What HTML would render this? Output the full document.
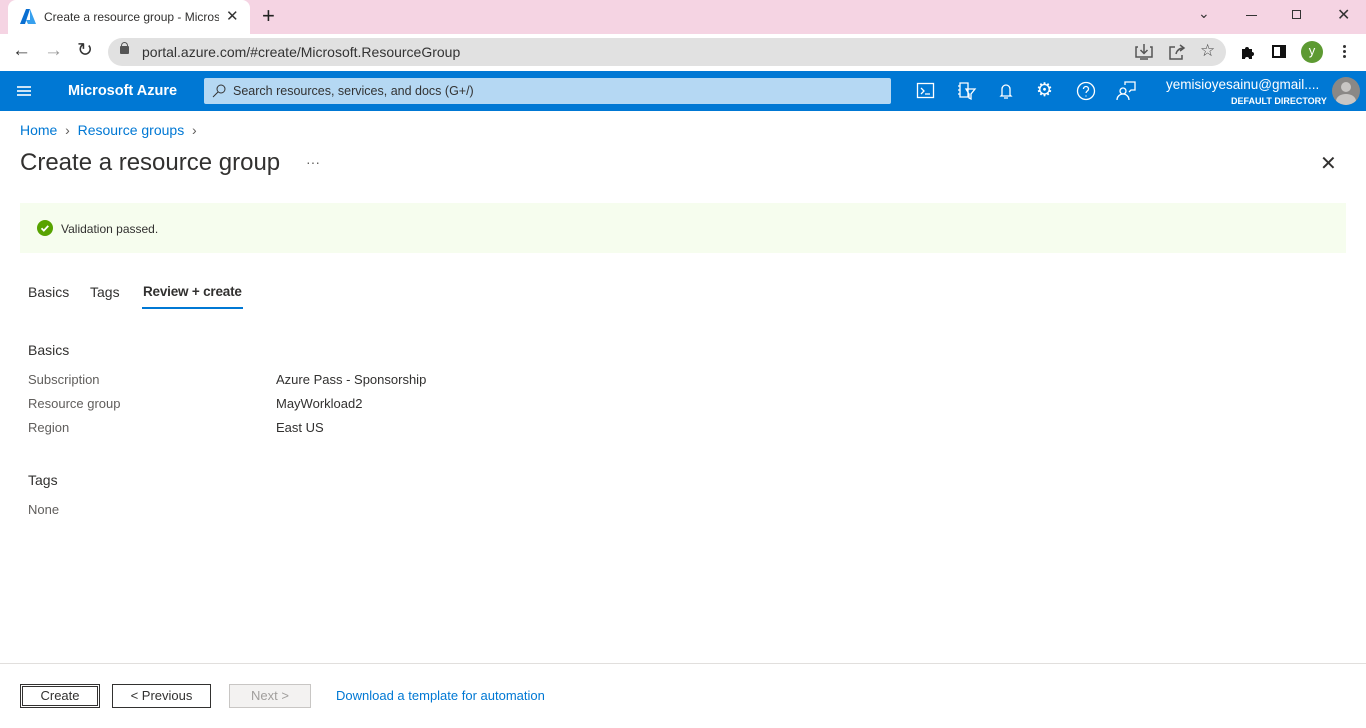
<!DOCTYPE html>
<html><head><style>
*{margin:0;padding:0;box-sizing:border-box}
body{width:1366px;height:728px;overflow:hidden;font-family:"Liberation Sans",sans-serif;background:#fff;position:relative;color:#323130}
.a{position:absolute}
.t{font-size:13px;color:#323130;white-space:nowrap}
.lbl{color:#605e5c}
.ic{position:absolute;fill:none;stroke:#fff;stroke-width:1.3}
.gi{position:absolute;fill:none;stroke:#555;stroke-width:1.5}
</style></head><body>
<!-- tab strip -->
<div class="a" style="left:0;top:0;width:1366px;height:34px;background:#f5d4e3"></div>
<div class="a" style="left:8px;top:0;width:242px;height:34px;background:#fff;border-radius:8px 8px 0 0"></div>
<svg class="a" style="left:20px;top:9px" width="16" height="15" viewBox="0 0 16 15"><path d="M6 0h4L5 15H0z" fill="#0a6fd1"/><path d="M10 0l6 15H8l-2-4h4z" fill="#37a0ee"/></svg>
<div class="a t" style="left:44px;top:10px;font-size:12px;width:175px;overflow:hidden">Create a resource group - Micros</div>
<div class="a" style="left:226px;top:7px;font-size:15px;color:#333">✕</div>
<div class="a" style="left:262px;top:3px;font-size:22px;color:#222">+</div>
<div class="a" style="left:1198px;top:5px;font-size:14px;color:#333">⌄</div>
<div class="a" style="left:1246px;top:15px;width:11px;height:1px;background:#333"></div>
<div class="a" style="left:1292px;top:10px;width:9px;height:9px;border:1px solid #333"></div>
<div class="a" style="left:1337px;top:5px;font-size:16px;color:#333">✕</div>
<!-- toolbar -->
<div class="a" style="left:0;top:34px;width:1366px;height:37px;background:#fff"></div>
<div class="a" style="left:12px;top:40px;font-size:19px;color:#333">←</div>
<div class="a" style="left:44px;top:40px;font-size:19px;color:#999">→</div>
<div class="a" style="left:77px;top:39px;font-size:19px;color:#333">↻</div>
<div class="a" style="left:108px;top:38px;width:1118px;height:28px;background:#e1e1e1;border-radius:14px"></div>
<div class="a" style="left:120px;top:46px;width:9px;height:8px;background:#555;border-radius:1px"></div>
<div class="a" style="left:121px;top:42px;width:7px;height:6px;border:1.5px solid #555;border-bottom:none;border-radius:4px 4px 0 0"></div>
<div class="a t" style="left:142px;top:44px;font-size:14px;color:#333">portal.azure.com/#create/Microsoft.ResourceGroup</div>
<svg class="gi" style="left:1135px;top:43px" width="18" height="18"><path d="M3 4H1v10h16V4h-2M9 1v9M5.5 7L9 10.5 12.5 7M5 16h8"/></svg>
<svg class="gi" style="left:1168px;top:43px" width="18" height="18"><path d="M7 4H2v12h12v-4M8 11c1-4 4-6 8-6M12 2l4 3-4 3"/></svg>
<div class="a" style="left:1200px;top:41px;font-size:17px;color:#444">☆</div>
<svg class="a" style="left:1240px;top:44px" width="16" height="16"><path d="M2 5h3a2 2 0 014 0h3v3a2 2 0 010 4v3H9a2 2 0 00-4 0H2z" fill="#111"/></svg>
<div class="a" style="left:1272px;top:45px;width:14px;height:13px;border:2px solid #111;border-right-width:6px"></div>
<div class="a" style="left:1301px;top:41px;width:22px;height:22px;border-radius:50%;background:#5d9a32;color:#fff;font-size:13px;text-align:center;line-height:20px">y</div>
<div class="a" style="left:1343px;top:45px;width:3px;height:3px;border-radius:50%;background:#333;box-shadow:0 5px #333,0 10px #333"></div>
<!-- azure header -->
<div class="a" style="left:0;top:71px;width:1366px;height:40px;background:#0078d4"></div>
<div class="a" style="left:17px;top:86px;width:14px;height:2px;background:#fff;box-shadow:0 4px #fff,0 8px #fff;opacity:.8"></div>
<div class="a" style="left:68px;top:83px;color:#fff;font-size:14.5px;font-weight:bold">Microsoft Azure</div>
<div class="a" style="left:204px;top:78px;width:687px;height:26px;background:#b5d8f3;border-radius:2px"></div>
<svg class="a" style="left:212px;top:84px" width="14" height="14"><circle cx="9" cy="5" r="4" fill="none" stroke="#333" stroke-width="1"/><path d="M6 8L1 13" stroke="#333"/></svg>
<div class="a" style="left:233px;top:84px;font-size:12.5px;color:#333">Search resources, services, and docs (G+/)</div>
<svg class="ic" style="left:916px;top:82px" width="20" height="18"><rect x="1.5" y="1.5" width="16" height="14"/><path d="M5 6l3 3-3 3M9 12h5"/></svg>
<svg class="ic" style="left:957px;top:81px" width="20" height="20"><path d="M3 2h8v14H3zM3 5H1M3 9H1M3 13H1M9 8h9l-4 5v5l-2-1v-4z"/></svg>
<svg class="ic" style="left:997px;top:81px" width="18" height="20"><path d="M5 14V8a4 4 0 018 0v6l1 1H4zM7 17h4"/></svg>
<div class="a" style="left:1036px;top:79px;font-size:19px;color:#fff">⚙</div>
<svg class="ic" style="left:1076px;top:81px" width="20" height="20"><circle cx="10" cy="10" r="8.5"/><path d="M7.5 8a2.5 2.5 0 115 0c0 2-2.5 2-2.5 4M10 14.5v1"/></svg>
<svg class="ic" style="left:1116px;top:81px" width="20" height="20"><circle cx="7" cy="10" r="3"/><path d="M1 19a6 6 0 0112 0M9 4V1h10v8h-4l-2 2"/></svg>
<div class="a" style="left:1166px;top:77px;color:#fff;font-size:13.5px">yemisioyesainu@gmail....</div>
<div class="a" style="left:1231px;top:96px;color:#fff;font-size:9px;font-weight:bold">DEFAULT DIRECTORY</div>
<div class="a" style="left:1332px;top:77px;width:28px;height:28px;border-radius:50%;background:#8a8886;overflow:hidden"><div class="a" style="left:9px;top:5px;width:10px;height:10px;border-radius:50%;background:#c8c6c4"></div><div class="a" style="left:4px;top:17px;width:20px;height:14px;border-radius:50%;background:#c8c6c4"></div></div>
<!-- content -->
<div class="a" style="left:20px;top:122px;font-size:14px;color:#0078d4">Home <span style="color:#605e5c">&nbsp;›&nbsp;</span> Resource groups <span style="color:#605e5c">&nbsp;›</span></div>
<div class="a" style="left:20px;top:149px;font-size:24px;color:#323130">Create a resource group</div>
<div class="a" style="left:306px;top:154px;font-size:14px;color:#605e5c">···</div>
<div class="a" style="left:1320px;top:151px;font-size:20px;color:#323130">✕</div>
<div class="a" style="left:20px;top:203px;width:1326px;height:50px;background:#f6fdee"></div>
<div class="a" style="left:37px;top:220px;width:16px;height:16px;border-radius:50%;background:#57a300"></div>
<svg class="a" style="left:37px;top:220px" width="16" height="16"><path d="M4.5 8.3l2.3 2.3 4.5-4.7" fill="none" stroke="#fff" stroke-width="1.8"/></svg>
<div class="a t" style="left:61px;top:222px;font-size:12px">Validation passed.</div>
<div class="a" style="left:28px;top:284px;font-size:14px">Basics</div>
<div class="a" style="left:90px;top:284px;font-size:14px">Tags</div>
<div class="a" style="left:143px;top:284px;font-size:13.5px;font-weight:600;letter-spacing:-0.2px">Review + create</div>
<div class="a" style="left:142px;top:307px;width:101px;height:2px;background:#0078d4"></div>
<div class="a" style="left:28px;top:342px;font-size:14px">Basics</div>
<div class="a t lbl" style="left:28px;top:372px">Subscription</div>
<div class="a t" style="left:276px;top:372px">Azure Pass - Sponsorship</div>
<div class="a t lbl" style="left:28px;top:396px">Resource group</div>
<div class="a t" style="left:276px;top:396px">MayWorkload2</div>
<div class="a t lbl" style="left:28px;top:420px">Region</div>
<div class="a t" style="left:276px;top:420px">East US</div>
<div class="a" style="left:28px;top:472px;font-size:14px">Tags</div>
<div class="a t lbl" style="left:28px;top:502px">None</div>
<!-- footer -->
<div class="a" style="left:0;top:663px;width:1366px;height:1px;background:#e1dfdd"></div>
<div class="a" style="left:20px;top:684px;width:80px;height:24px;border:1px solid #323130;outline:1px solid #323130;outline-offset:-3px;font-size:13px;text-align:center;line-height:22px">Create</div>
<div class="a" style="left:112px;top:684px;width:99px;height:24px;border:1px solid #323130;font-size:13px;text-align:center;line-height:22px">&lt; Previous</div>
<div class="a" style="left:229px;top:684px;width:82px;height:24px;border:1px solid #c8c6c4;background:#f3f2f1;color:#a19f9d;font-size:13px;text-align:center;line-height:22px">Next &gt;</div>
<div class="a t" style="left:336px;top:688px;color:#0078d4">Download a template for automation</div>
</body></html>
